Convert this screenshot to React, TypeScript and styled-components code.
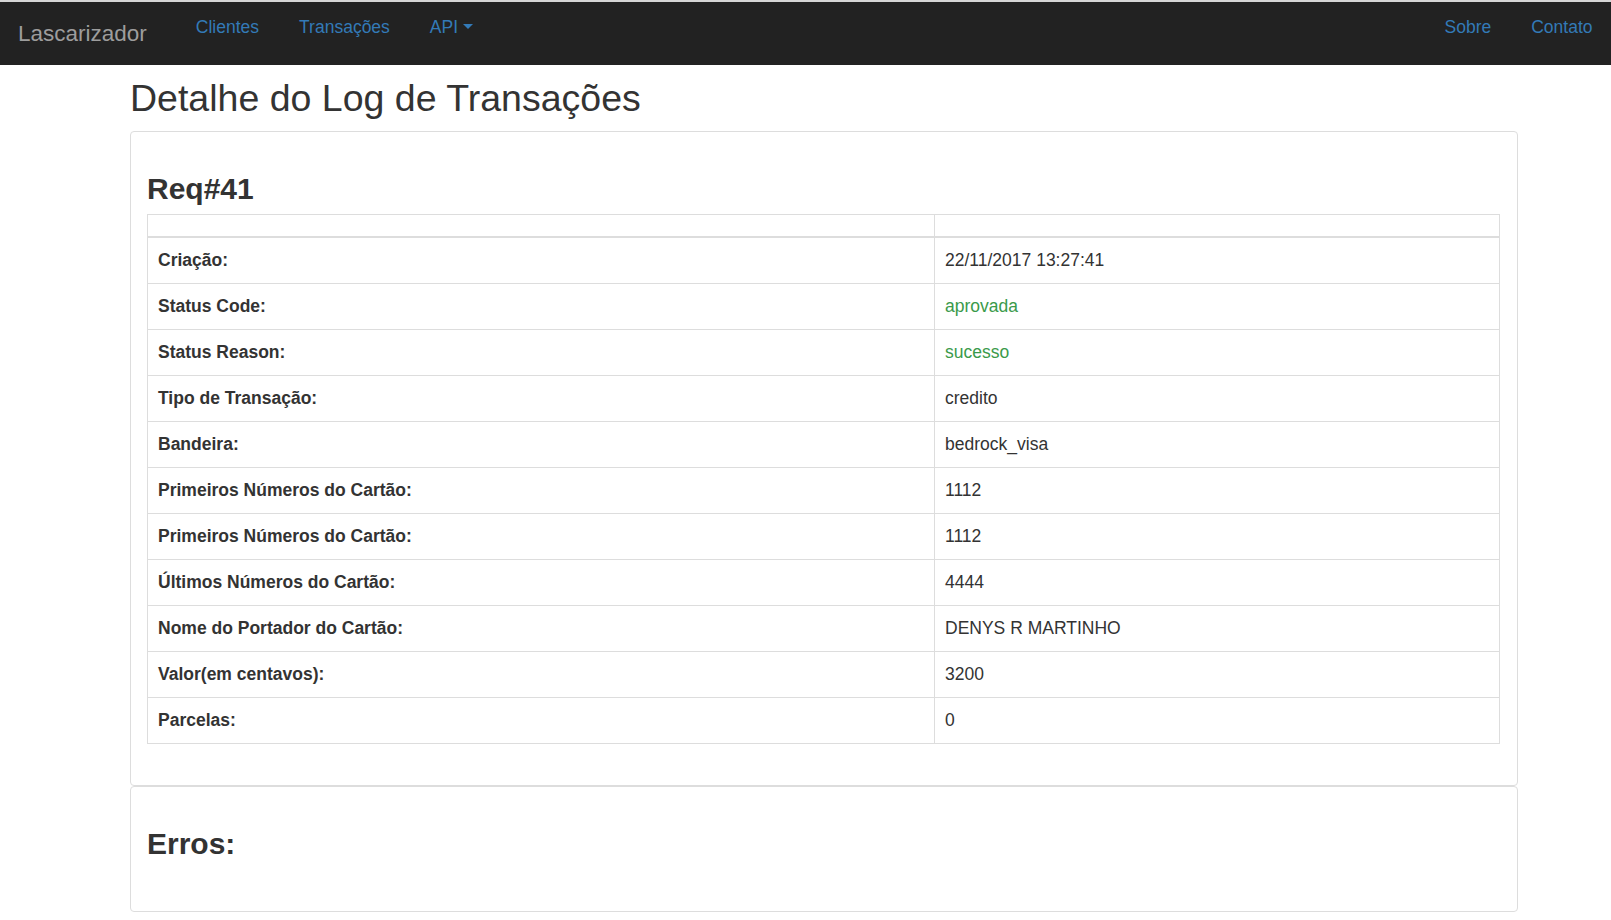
import React from "react";
import styled, { createGlobalStyle } from "styled-components";

const GlobalStyle = createGlobalStyle`
  html, body {
    margin: 0;
    padding: 0;
    background: #ffffff;
  }
  body {
    font-family: "Liberation Sans", Arial, Helvetica, sans-serif;
    font-size: 17.5px;
    line-height: 25px;
    color: #333333;
  }
  * { box-sizing: border-box; }
`;

const Navbar = styled.nav`
  display: flex;
  align-items: flex-start;
  height: 65px;
  background: #222222;
  border-top: 2px solid #d6d6d6;
`;

const Brand = styled.a`
  padding: 19px 29px 0 18px;
  font-size: 22.5px;
  line-height: 25px;
  color: #9d9d9d;
  text-decoration: none;
`;

const NavList = styled.ul<{ $right?: boolean }>`
  display: flex;
  list-style: none;
  margin: 0;
  padding: 0;
  margin-left: ${(p) => (p.$right ? "auto" : "0")};
  margin-right: ${(p) => (p.$right ? "-1.5px" : "0")};
`;

const NavLink = styled.a`
  display: block;
  padding: 13px 20px 0;
  font-size: 17.5px;
  line-height: 25px;
  color: #337ab7;
  text-decoration: none;
  white-space: nowrap;
`;

const Caret = styled.span`
  display: inline-block;
  margin-left: 4.5px;
  vertical-align: 4.5px;
  width: 0;
  height: 0;
  border-top: 5.25px solid currentColor;
  border-left: 5.25px solid transparent;
  border-right: 5.25px solid transparent;
`;

const Main = styled.main`
  width: 1388px;
  margin-left: 130px;
`;

const PageTitle = styled.h2`
  margin: 13px 0 12px;
  font-size: 37.5px;
  line-height: 41px;
  font-weight: 400;
  color: #333333;
`;

const Card = styled.section`
  border: 1px solid #dddddd;
  border-radius: 4px;
  padding: 20px 17px 20px 16px;
  background: #ffffff;
`;

const CardTitle = styled.h3`
  margin: 21px 0 10px;
  font-size: 30px;
  line-height: 31px;
  font-weight: 700;
  color: #333333;
`;

const Table = styled.table`
  width: 100%;
  border-collapse: collapse;
  table-layout: fixed;
  border: 1px solid #dddddd;
  margin-bottom: 21px;
`;

const HeadCell = styled.th`
  padding: 10px 10px 11px;
  border: 1px solid #dddddd;
  border-bottom: 2px solid #dddddd;
`;

const LabelCell = styled.td`
  padding: 10px;
  border: 1px solid #dddddd;
  font-weight: 700;
  line-height: 25px;
  vertical-align: top;
`;

const ValueCell = styled.td<{ $success?: boolean }>`
  padding: 10px;
  border: 1px solid #dddddd;
  line-height: 25px;
  vertical-align: top;
  color: ${(p) => (p.$success ? "#3a9a4a" : "#333333")};
`;

const ErrorList = styled.ul`
  margin: 0;
  padding: 0;
  min-height: 22px;
  list-style: none;
`;

type Row = { label: string; value: string; success?: boolean };

const rows: Row[] = [
  { label: "Criação:", value: "22/11/2017 13:27:41" },
  { label: "Status Code:", value: "aprovada", success: true },
  { label: "Status Reason:", value: "sucesso", success: true },
  { label: "Tipo de Transação:", value: "credito" },
  { label: "Bandeira:", value: "bedrock_visa" },
  { label: "Primeiros Números do Cartão:", value: "1112" },
  { label: "Primeiros Números do Cartão:", value: "1112" },
  { label: "Últimos Números do Cartão:", value: "4444" },
  { label: "Nome do Portador do Cartão:", value: "DENYS R MARTINHO" },
  { label: "Valor(em centavos):", value: "3200" },
  { label: "Parcelas:", value: "0" },
];

export default function App() {
  return (
    <>
      <GlobalStyle />
      <Navbar>
        <Brand href="#">Lascarizador</Brand>
        <NavList>
          <li><NavLink href="#">Clientes</NavLink></li>
          <li><NavLink href="#">Transações</NavLink></li>
          <li>
            <NavLink href="#">
              API<Caret />
            </NavLink>
          </li>
        </NavList>
        <NavList $right>
          <li><NavLink href="#">Sobre</NavLink></li>
          <li><NavLink href="#">Contato</NavLink></li>
        </NavList>
      </Navbar>
      <Main>
        <PageTitle>Detalhe do Log de Transações</PageTitle>
        <Card>
          <CardTitle>Req#41</CardTitle>
          <Table>
            <colgroup>
              <col style={{ width: "787px" }} />
              <col />
            </colgroup>
            <thead>
              <tr>
                <HeadCell />
                <HeadCell />
              </tr>
            </thead>
            <tbody>
              {rows.map((r, i) => (
                <tr key={i}>
                  <LabelCell>{r.label}</LabelCell>
                  <ValueCell $success={r.success}>{r.value}</ValueCell>
                </tr>
              ))}
            </tbody>
          </Table>
        </Card>
        <Card>
          <CardTitle>Erros:</CardTitle>
          <ErrorList />
        </Card>
      </Main>
    </>
  );
}
